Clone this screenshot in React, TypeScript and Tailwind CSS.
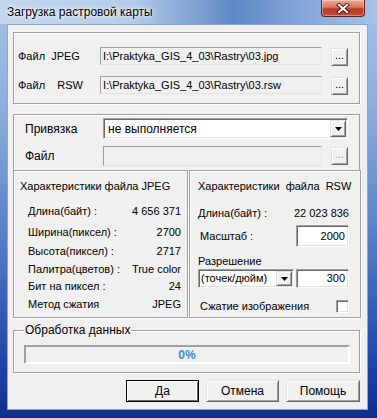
import React from "react";

const etched = "border border-[#a0a0a0] shadow-[inset_1px_1px_0_#fff,1px_1px_0_#fff]";
const raised =
  "border border-t-[#e3e3e3] border-l-[#e3e3e3] border-b-[#696969] border-r-[#696969] shadow-[inset_1px_1px_0_#fff,inset_-1px_-1px_0_#a0a0a0] bg-[#f0f0f0]";
const sunken =
  "border border-t-[#a0a0a0] border-l-[#a0a0a0] border-b-white border-r-white shadow-[inset_1px_1px_0_#696969,inset_-1px_-1px_0_#e3e3e3] bg-white";
const flat = "border border-t-[#a0a0a0] border-l-[#a0a0a0] border-b-[#e3e3e3] border-r-[#e3e3e3] bg-[#f0f0f0]";

function Dots({ disabled = false }: { disabled?: boolean }) {
  return (
    <div
      className={`${raised} w-[17px] h-[18px] flex items-end justify-center pb-[4px] text-[11px] leading-none ${
        disabled ? "text-[#a0a0a0]" : "text-black"
      }`}
    >
      ...
    </div>
  );
}

function Arrow() {
  return (
    <div className={`${raised} w-[16px] h-full flex items-center justify-center`}>
      <svg width="7" height="4" viewBox="0 0 7 4">
        <path d="M0 0h7L3.5 4z" fill="#000" />
      </svg>
    </div>
  );
}

const jpegRows = [
  { label: "Длина(байт) :", value: "4 656 371", cls: "mt-[9px] h-[18px]" },
  { label: "Ширина(пиксел) :", value: "2700", cls: "mt-[3px] h-[18px]" },
  { label: "Высота(пиксел) :", value: "2717", cls: "mt-[1px] h-[18px]" },
  { label: "Палитра(цветов) :", value: "True color", cls: "h-[18px]" },
  { label: "Бит на пиксел :", value: "24", cls: "h-[17px]" },
  { label: "Метод сжатия", value: "JPEG", cls: "h-[19px]" },
];

export default function App() {
  return (
    <div className="w-[377px] h-[418px] overflow-hidden bg-[linear-gradient(180deg,#a9c3e6_0%,#8eaedc_25%,#5a82c6_55%,#2348a8_85%,#0f2e8e_100%)] font-['Liberation_Sans',Arial,sans-serif] text-[11px] text-black">
      {/* title bar */}
      <div className="h-[24px] flex justify-between pl-[7px] pr-[12px] bg-[linear-gradient(90deg,#c4d7ee_0%,#b3cbe9_35%,#5f89c5_62%,#7ea3d6_78%,#a8c3e6_100%)]">
        <div className="pt-[5px] text-[12px] leading-[14px] [text-shadow:0_0_6px_#fff,0_0_3px_#fff]">
          Загрузка растровой карты
        </div>
        <div className="w-[44px] h-[17px] rounded-b-[4px] border border-t-0 border-[#6a1d12] bg-[linear-gradient(180deg,#e8aa96_0%,#d9785f_45%,#c0392a_55%,#c44a32_100%)] shadow-[inset_0_0_0_1px_rgba(255,255,255,0.35)] flex items-center justify-center">
          <svg width="14" height="11" viewBox="0 0 14 11">
            <path d="M3 2l8 7M11 2l-8 7" stroke="#4a1a12" strokeWidth="4" strokeLinecap="square" />
            <path d="M3 2l8 7M11 2l-8 7" stroke="#fff" strokeWidth="2.2" strokeLinecap="square" />
          </svg>
        </div>
      </div>

      {/* client area */}
      <div className="ml-[7px] w-[361px] h-[386px] border border-[#8da6cf] bg-[#f0f0f0] pl-[5px] flex flex-col">
        {/* files */}
        <div className={`${etched} mt-[7px] w-[347px] h-[72px] pl-[4px] pt-[14px] flex flex-col gap-[10px]`}>
          <div className="flex items-start">
            <div className="w-[82px] h-[18px] flex items-center whitespace-pre">Файл  JPEG</div>
            <div className={`${flat} w-[222px] h-[18px] flex items-center pl-[2px]`}>I:\Praktyka_GIS_4_03\Rastry\03.jpg</div>
            <div className="ml-[9px] mt-[1px]">
              <Dots />
            </div>
          </div>
          <div className="flex items-start">
            <div className="w-[82px] h-[18px] flex items-center whitespace-pre">Файл    RSW</div>
            <div className={`${flat} w-[222px] h-[18px] flex items-center pl-[2px]`}>I:\Praktyka_GIS_4_03\Rastry\03.rsw</div>
            <div className="ml-[9px] mt-[1px]">
              <Dots />
            </div>
          </div>
        </div>

        {/* binding */}
        <div className="mt-[10px] w-[347px] h-[56px] border border-b-0 border-[#a0a0a0] shadow-[inset_1px_1px_0_#fff] pl-[11px] pt-[3px] flex flex-col text-[12px]">
          <div className="flex items-center h-[21px]">
            <div className="w-[78px]">Привязка</div>
            <div className={`${sunken} w-[245px] h-[21px] flex items-stretch p-[1px]`}>
              <div className="flex-1 flex items-center pl-[3px]">не выполняется</div>
              <Arrow />
            </div>
          </div>
          <div className="flex items-start mt-[7px]">
            <div className="w-[78px] h-[20px] flex items-center">Файл</div>
            <div className={`${flat} w-[219px] h-[20px]`} />
            <div className="ml-[9px] mt-[1px]">
              <Dots disabled />
            </div>
          </div>
        </div>

        {/* two panels */}
        <div className="flex gap-[1px] h-[148px]">
          <div className={`${etched} w-[175px] pl-[6px] pr-[6px] pt-[8px] flex flex-col`}>
            <div className="h-[14px] leading-[14px]">Характеристики файла JPEG</div>
            {jpegRows.map((r) => (
              <div key={r.label} className={`${r.cls} flex items-center justify-between pl-[8px]`}>
                <span>{r.label}</span>
                <span>{r.value}</span>
              </div>
            ))}
          </div>
          <div className={`${etched} w-[172px] pl-[8px] pr-[11px] pt-[8px] flex flex-col`}>
            <div className="h-[14px] leading-[14px] whitespace-pre">Характеристики  файла  RSW</div>
            <div className="mt-[11px] h-[18px] flex items-center justify-between">
              <span>Длина(байт) :</span>
              <span>22 023 836</span>
            </div>
            <div className="mt-[3px] h-[22px] flex items-center justify-between pl-[2px]">
              <span>Масштаб :</span>
              <div className={`${sunken} w-[53px] h-[22px] flex items-center justify-end pr-[3px]`}>2000</div>
            </div>
            <div className="mt-[7px] h-[14px] leading-[14px]">Разрешение</div>
            <div className="mt-[1px] h-[19px] flex gap-[2px]">
              <div className={`${sunken} w-[96px] h-[19px] flex items-stretch p-[1px]`}>
                <div className="flex-1 flex items-center pl-[1px]">(точек/дюйм)</div>
                <Arrow />
              </div>
              <div className={`${sunken} w-[53px] h-[19px] flex items-center justify-end pr-[3px]`}>300</div>
            </div>
            <div className="mt-[11px] h-[14px] flex items-center justify-between pl-[2px]">
              <span>Сжатие изображения</span>
              <div className={`${sunken} w-[13px] h-[13px]`} />
            </div>
          </div>
        </div>

        {/* progress */}
        <fieldset className={`${etched} mt-[5px] w-[347px] pl-[10px] pr-[9px] pb-[8px]`}>
          <legend className="px-[1px] h-[14px] leading-[14px] bg-[#f0f0f0] text-[12px]">Обработка данных</legend>
          <div className="mt-[8px] w-[326px] h-[19px] border-2 border-t-[#a0a0a0] border-l-[#a0a0a0] border-b-white border-r-white flex items-center justify-center">
            <span className="text-[12px] font-bold text-[#3a8ee6]">0%</span>
          </div>
        </fieldset>

        {/* buttons */}
        <div className="mt-[7px] w-[347px] flex justify-end gap-[7px] text-[12px]">
          <div className="w-[73px] h-[22px] border border-black bg-[#f0f0f0] shadow-[inset_1px_1px_0_#fff,inset_-1px_-1px_0_#696969] flex items-center justify-center">
            Да
          </div>
          <div className={`${raised} w-[73px] h-[22px] flex items-center justify-center`}>Отмена</div>
          <div className={`${raised} w-[74px] h-[22px] flex items-center justify-center`}>Помощь</div>
        </div>
      </div>
    </div>
  );
}
